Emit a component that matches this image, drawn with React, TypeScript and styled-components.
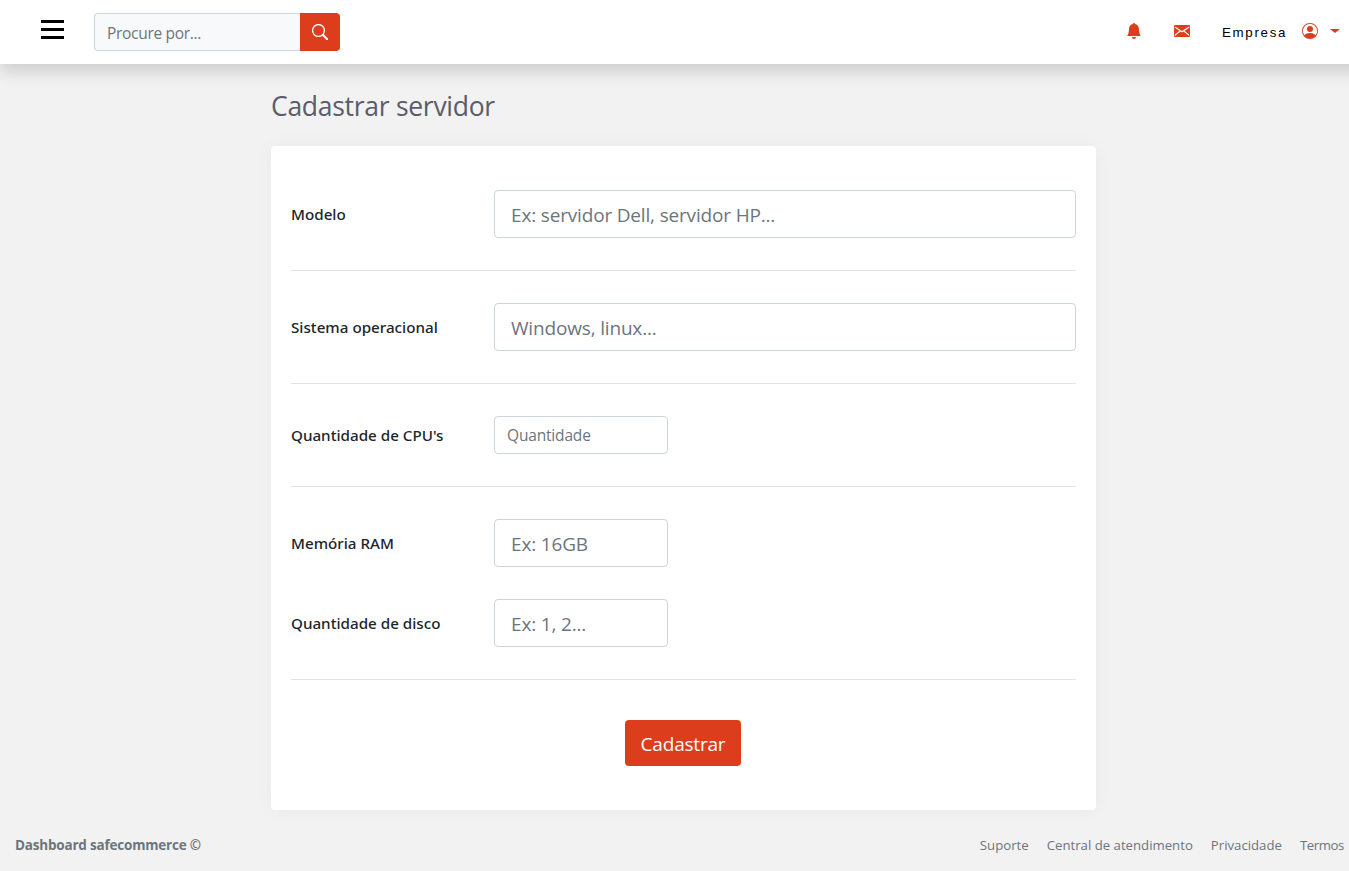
import React from "react";
import styled, { createGlobalStyle } from "styled-components";
import { BsBellFill, BsPersonCircle } from "react-icons/bs";

const accent = "#dc3d1d";
const sans = '"Open Sans", "Noto Sans", sans-serif';

const GlobalStyle = createGlobalStyle`
  *, *::before, *::after { box-sizing: border-box; }
  body {
    margin: 0;
    background: #f2f2f2;
    color: #212529;
    font: 400 16px/24px ${sans};
  }
`;

const Page = styled.div`
  display: flex;
  flex-direction: column;
  height: 871px;
  overflow: hidden;
`;

const Header = styled.header`
  flex: none;
  display: flex;
  align-items: center;
  justify-content: space-between;
  width: calc(100% + 24px);
  height: 64px;
  padding: 0 33px 0 41px;
  background: #fff;
  box-shadow: 0 8px 16px rgba(0, 0, 0, 0.15);
`;

const HeaderSide = styled.div`
  display: flex;
  align-items: center;
`;

const MenuButton = styled.button`
  display: flex;
  flex-direction: column;
  gap: 5px;
  width: 23px;
  margin: 0 30px 5px 0;
  padding: 0;
  border: 0;
  background: none;
`;

const MenuBar = styled.span`
  height: 3px;
  background: #000;
`;

const Search = styled.form`
  display: flex;
  height: 38px;
`;

const SearchInput = styled.input`
  width: 206px;
  padding: 2px 12px 0;
  border: 1px solid #ced4da;
  border-right: 0;
  border-radius: 4px 0 0 4px;
  background: #f8f9fa;
  font: 400 15.5px ${sans};
  letter-spacing: -0.3px;
  &::placeholder { color: #6c757d; opacity: 1; }
`;

const SearchButton = styled.button`
  display: flex;
  align-items: center;
  justify-content: center;
  width: 40px;
  padding: 0;
  border: 0;
  border-radius: 0 4px 4px 0;
  background: ${accent};
  color: #fff;
`;

const IconLink = styled.a`
  display: flex;
  margin: 0 32px 2px 0;
  color: ${accent};
  font-size: 16px;
`;

const Company = styled.span`
  margin: 2px 14.8px 0 0;
  color: #000;
  font: 13.333px/20px "Liberation Sans", Arial, sans-serif;
  letter-spacing: 1.7px;
`;

const Account = styled.a`
  display: flex;
  align-items: center;
  gap: 12px;
  margin-bottom: 2px;
  color: ${accent};
  font-size: 16px;
`;

const Caret = styled.span`
  margin-bottom: 1px;
  border: 5px solid transparent;
  border-top: 4.5px solid ${accent};
  border-bottom: 0;
`;

const Main = styled.main`
  flex: 1;
  width: 825px;
  margin-left: 271px;
`;

const Title = styled.h1`
  margin: 24px 0 22px;
  color: #5a5c69;
  font-size: 26.5px;
  font-weight: 400;
  line-height: 36px;
  letter-spacing: -0.28px;
`;

const Card = styled.form`
  height: 664px;
  padding: 44px 20px 0;
  border-radius: 4px;
  background: #fff;
  box-shadow: 0 0 20px rgba(31, 45, 61, 0.04);
`;

const Row = styled.div`
  display: flex;
  align-items: center;
  & + & { margin-top: 32px; }
`;

const Label = styled.label`
  width: 203px;
  font: 500 15.2px/24px "Noto Sans", sans-serif;
`;

const Field = styled.input<{ $wide?: boolean; $small?: boolean }>`
  width: ${(p) => (p.$wide ? 582 : 174)}px;
  height: ${(p) => (p.$small ? 38 : 48)}px;
  padding: ${(p) => (p.$small ? "0 12px" : "2px 16px 0")};
  border: 1px solid #ced4da;
  border-radius: 4px;
  font: 400 ${(p) => (p.$small ? 15.5 : 19)}px ${sans};
  letter-spacing: -0.17px;
  &::placeholder { color: #6c757d; opacity: 1; }
`;

const Divider = styled.hr`
  height: 1px;
  margin: 32px 0;
  border: 0;
  background: #e2e3e5;
`;

const Actions = styled.div`
  display: flex;
  justify-content: center;
  padding: 8px 1px 0 0;
`;

const Submit = styled.button`
  width: 116px;
  height: 46px;
  padding: 2px 0 0;
  border: 0;
  border-radius: 4px;
  background: ${accent};
  color: #fff;
  font: 400 19px ${sans};
  letter-spacing: -0.2px;
`;

const Footer = styled.footer`
  display: flex;
  align-items: center;
  justify-content: space-between;
  height: 61px;
  padding: 9px 5px 0 15px;
  color: #6c757d;
`;

const Brand = styled.strong`
  font-size: 13.5px;
  font-weight: 700;
  letter-spacing: -0.2px;
`;

const Links = styled.nav`
  display: flex;
  gap: 18px;
  font-size: 13.2px;
`;

const FooterLink = styled.a<{ $tight?: boolean }>`
  letter-spacing: ${(p) => (p.$tight ? "-0.4px" : "normal")};
`;

const SearchIcon = () => (
  <svg width="16" height="16" viewBox="0 0 16 16" fill="none" stroke="currentColor">
    <circle cx="6.5" cy="6.5" r="5.9" strokeWidth="1.3" />
    <path d="M11 11l4 4" strokeWidth="2.2" strokeLinecap="round" />
  </svg>
);

const MailIcon = () => (
  <svg width="16" height="16" viewBox="0 0 16 16">
    <rect y="2" width="16" height="12" rx="1" fill="currentColor" />
    <path d="M.8 4L8 8.8 15.2 4M.8 12.4L6.2 8M15.2 12.4L9.8 8" fill="none" stroke="#fff" strokeWidth="1.2" />
  </svg>
);

export default function App() {
  return (
    <>
      <GlobalStyle />
      <Page>
        <Header>
          <HeaderSide>
            <MenuButton type="button" aria-label="Menu">
              <MenuBar />
              <MenuBar />
              <MenuBar />
            </MenuButton>
            <Search>
              <SearchInput placeholder="Procure por..." />
              <SearchButton type="button" aria-label="Procurar">
                <SearchIcon />
              </SearchButton>
            </Search>
          </HeaderSide>
          <HeaderSide>
            <IconLink><BsBellFill /></IconLink>
            <IconLink><MailIcon /></IconLink>
            <Company>Empresa</Company>
            <Account>
              <BsPersonCircle />
              <Caret />
            </Account>
          </HeaderSide>
        </Header>
        <Main>
          <Title>Cadastrar servidor</Title>
          <Card>
            <Row>
              <Label>Modelo</Label>
              <Field $wide placeholder="Ex: servidor Dell, servidor HP..." />
            </Row>
            <Divider />
            <Row>
              <Label>Sistema operacional</Label>
              <Field $wide placeholder="Windows, linux..." />
            </Row>
            <Divider />
            <Row>
              <Label>Quantidade de CPU's</Label>
              <Field $small placeholder="Quantidade" />
            </Row>
            <Divider />
            <Row>
              <Label>Memória RAM</Label>
              <Field placeholder="Ex: 16GB" />
            </Row>
            <Row>
              <Label>Quantidade de disco</Label>
              <Field placeholder="Ex: 1, 2..." />
            </Row>
            <Divider />
            <Actions>
              <Submit type="button">Cadastrar</Submit>
            </Actions>
          </Card>
        </Main>
        <Footer>
          <Brand>Dashboard safecommerce ©</Brand>
          <Links>
            <FooterLink>Suporte</FooterLink>
            <FooterLink>Central de atendimento</FooterLink>
            <FooterLink>Privacidade</FooterLink>
            <FooterLink $tight>Termos</FooterLink>
          </Links>
        </Footer>
      </Page>
    </>
  );
}
